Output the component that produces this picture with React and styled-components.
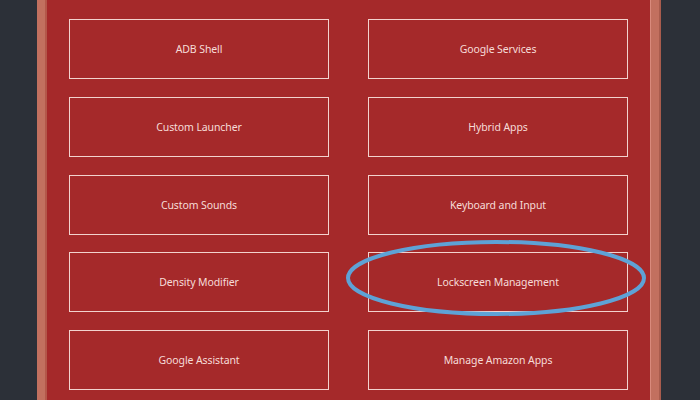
import React from 'react';
import styled, {createGlobalStyle} from 'styled-components';

const GlobalStyle = createGlobalStyle`
  html, body {
    margin: 0;
    padding: 0;
    background: #2c3038;
    font-family: "Noto Sans", "Open Sans", sans-serif;
  }
`

const items = [
    ['ADB Shell', 'Google Services'],
    ['Custom Launcher', 'Hybrid Apps'],
    ['Custom Sounds', 'Keyboard and Input'],
    ['Density Modifier', 'Lockscreen Management'],
    ['Google Assistant', 'Manage Amazon Apps'],
]

const App = () => {
    return (
        <>
            <GlobalStyle/>
            <Page>
                <Frame>
                    <Panel>
                        <Grid>
                            {items.flat().map(label => (
                                <OptionButton key={label}>{label}</OptionButton>
                            ))}
                        </Grid>
                        <Highlight viewBox="0 0 310 84" aria-hidden="true">
                            <ellipse cx="155" cy="42" rx="148" ry="36" fill="none" stroke="#5ea2d6" strokeWidth="4"/>
                        </Highlight>
                    </Panel>
                </Frame>
            </Page>
        </>
    );
};

const Page = styled.div`
  width: 700px;
  height: 400px;
  overflow: hidden;
  display: flex;
  padding-left: 37px;
  box-sizing: border-box;
`

const Frame = styled.div`
  width: 624px;
  height: 400px;
  display: flex;
  background: #c2705f;
  border-left: 8px solid #c2705f;
  border-right: 2px solid #a95c4d;
  box-sizing: border-box;
  padding-right: 8px;
`

const Panel = styled.div`
  position: relative;
  flex: 1;
  background: #a5292a;
  border-left: 2px solid #b4574a;
  border-right: 1px solid #d98a7c;
  padding: 19px 21px 0 22px;
`

const Grid = styled.div`
  display: grid;
  grid-template-columns: 260px 260px;
  grid-auto-rows: 60px;
  column-gap: 39px;
  row-gap: 17.75px;
`

const OptionButton = styled.div`
  box-sizing: border-box;
  display: flex;
  align-items: center;
  justify-content: center;
  border: 1px solid #f3d2ce;
  color: #f6dcd8;
  font-size: 10.5px;
  letter-spacing: -0.1px;
`

const Highlight = styled.svg`
  position: absolute;
  left: 294px;
  top: 236px;
  width: 310px;
  height: 84px;
  pointer-events: none;
`

export default App;
